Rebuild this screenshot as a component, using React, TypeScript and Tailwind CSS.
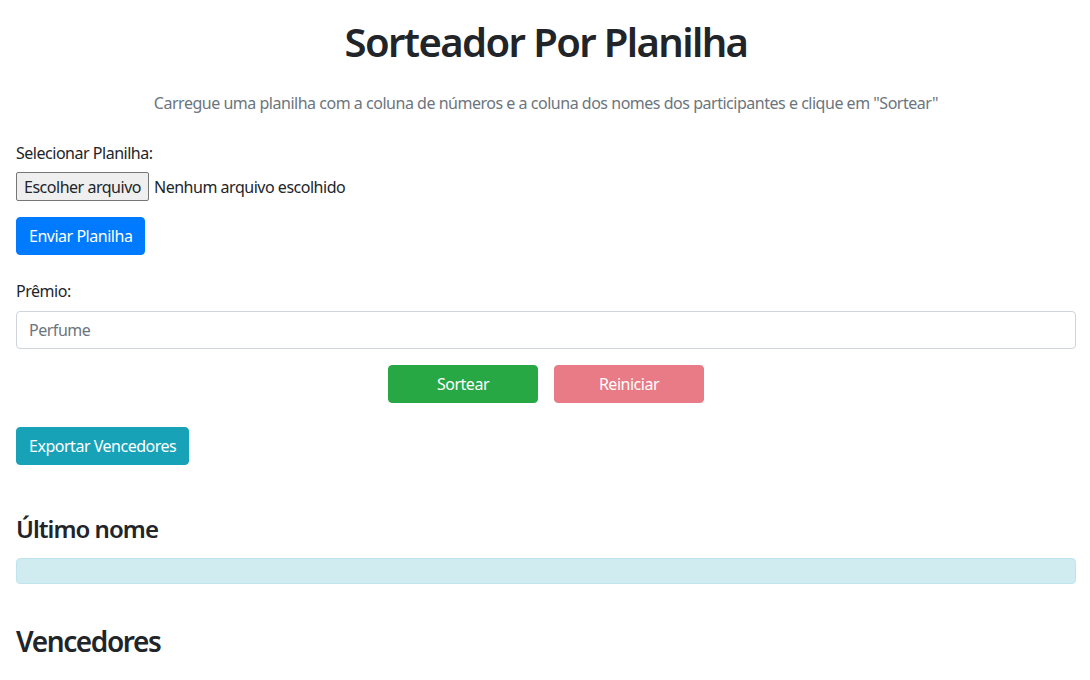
import React from "react";

export default function App() {
  return (
    <div className="min-h-[680px] bg-white pl-4 pr-[14px] pt-[18px] text-[16px] tracking-[-0.03em] text-[#212529] font-['Noto_Sans',sans-serif]">
      <h1 className="text-center text-[40px] leading-[48px] font-semibold tracking-[-0.04em]">Sorteador Por Planilha</h1>
      <p className="mt-[25px] text-center leading-6 text-[#6c757d]">
        Carregue uma planilha com a coluna de números e a coluna dos nomes dos participantes e clique em "Sortear"
      </p>
      <label className="mt-[26px] block leading-6">Selecionar Planilha:</label>
      <div className="mt-[7px] flex h-[29px] items-center">
        <span className="flex h-[29px] items-center rounded-[2px] border border-[#767676] bg-[#efefef] px-[7px] leading-6">
          Escolher arquivo
        </span>
        <span className="ml-[5px] leading-6">Nenhum arquivo escolhido</span>
      </div>
      <div className="mt-4">
        <button className="h-[38px] rounded-[4px] border border-[#007bff] bg-[#007bff] px-3 leading-6 text-white">
          Enviar Planilha
        </button>
      </div>
      <label className="mt-6 block leading-6">Prêmio:</label>
      <div className="mt-2 flex h-[38px] items-center rounded-[4px] border border-[#ced4da] px-3 leading-6 text-[#6c757d]">
        Perfume
      </div>
      <div className="mt-4 flex justify-center gap-4">
        <button className="h-[38px] w-[150px] rounded-[4px] border border-[#28a745] bg-[#28a745] leading-6 text-white">
          Sortear
        </button>
        <button className="h-[38px] w-[150px] rounded-[4px] border border-[#dc3545] bg-[#dc3545] leading-6 text-white opacity-65">
          Reiniciar
        </button>
      </div>
      <div className="mt-6">
        <button className="h-[38px] rounded-[4px] border border-[#17a2b8] bg-[#17a2b8] px-3 leading-6 text-white">
          Exportar Vencedores
        </button>
      </div>
      <h4 className="mt-[49px] text-[24px] leading-[29px] font-semibold tracking-[-0.04em]">Último nome</h4>
      <div className="mt-[15px] h-[26px] rounded-[4px] border border-[#bee5eb] bg-[#d1ecf1]" />
      <h3 className="mt-[40px] text-[28px] leading-[34px] font-semibold tracking-[-0.05em]">Vencedores</h3>
    </div>
  );
}
